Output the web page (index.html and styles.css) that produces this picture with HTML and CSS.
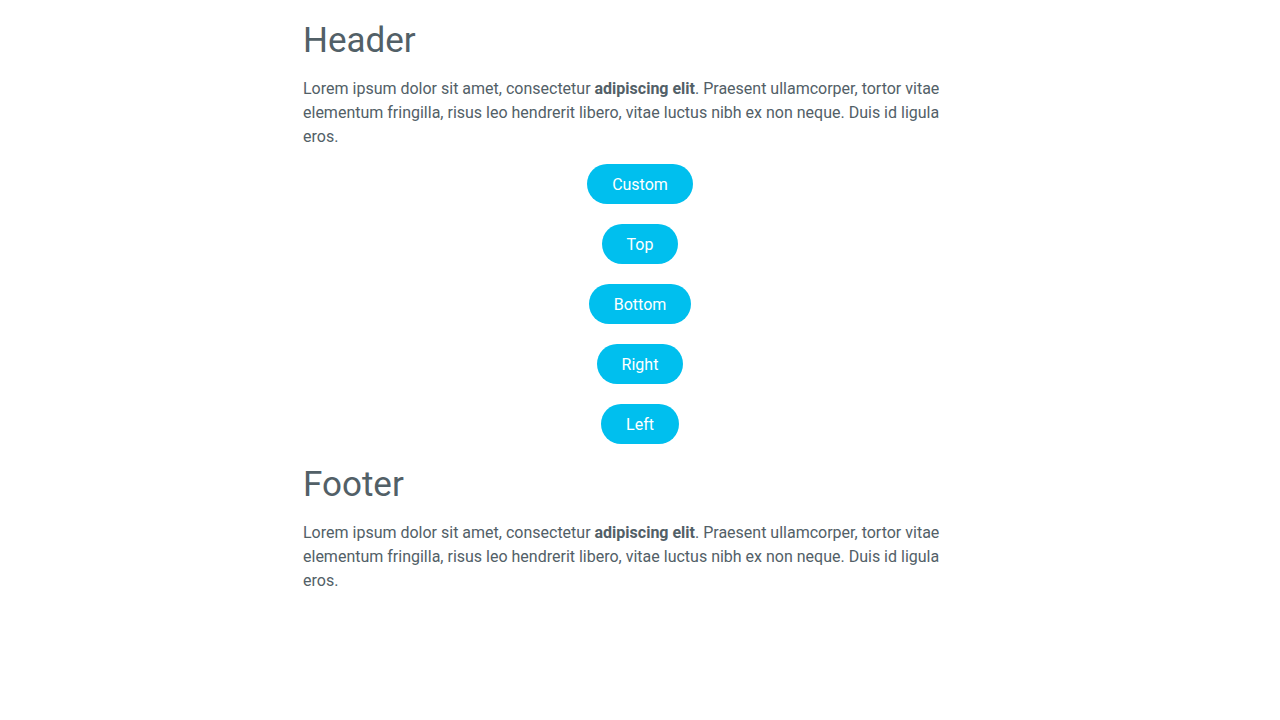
FILE: index.html
```html
<!DOCTYPE html>
<html lang="en">
<head>
<meta charset="utf-8">
<title>Tooltips</title>
<link rel="stylesheet" href="styles.css">
</head>
<body>
<main class="page">
  <h1 class="title">Header</h1>
  <p class="text">Lorem ipsum dolor sit amet, consectetur <strong>adipiscing elit</strong>. Praesent ullamcorper, tortor vitae elementum fringilla, risus leo hendrerit libero, vitae luctus nibh ex non neque. Duis id ligula eros.</p>
  <div class="buttons">
    <button class="btn">Custom</button>
    <button class="btn">Top</button>
    <button class="btn">Bottom</button>
    <button class="btn">Right</button>
    <button class="btn">Left</button>
  </div>
  <h1 class="title">Footer</h1>
  <p class="text">Lorem ipsum dolor sit amet, consectetur <strong>adipiscing elit</strong>. Praesent ullamcorper, tortor vitae elementum fringilla, risus leo hendrerit libero, vitae luctus nibh ex non neque. Duis id ligula eros.</p>
</main>
</body>
</html>
```
FILE: styles.css
```css
html, body {
  margin: 0;
  padding: 0;
  background: #ffffff;
}
body {
  font-family: Roboto, "Liberation Sans", sans-serif;
  font-size: 16px;
  line-height: 24px;
  color: #526067;
}
.page {
  width: 674px;
  margin: 0 auto;
  padding-top: 19px;
}
.title {
  margin: 0 0 15px;
  font-size: 35px;
  line-height: 43px;
  font-weight: 400;
}
.text {
  margin: 0 0 15px;
}
.text strong {
  font-weight: 700;
}
.buttons {
  display: flex;
  flex-direction: column;
  align-items: center;
  gap: 20px;
  margin-bottom: 19px;
}
.btn {
  box-sizing: border-box;
  height: 40px;
  padding: 2px 25px 0;
  border: none;
  border-radius: 20px;
  background: #00bfee;
  color: #ffffff;
  font-family: Roboto, "Liberation Sans", sans-serif;
  font-size: 16px;
  line-height: 24px;
  cursor: pointer;
}
```
